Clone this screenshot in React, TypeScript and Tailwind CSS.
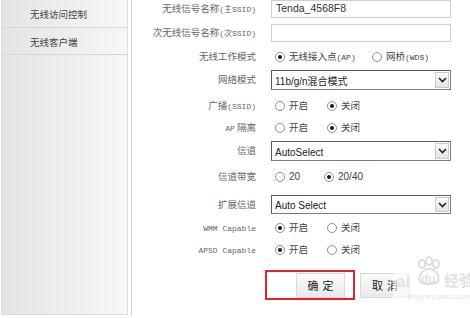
import React from "react";

const cjk = { fontFamily: '"Noto Sans CJK SC", "Noto Sans", sans-serif' };
const mono = { fontFamily: '"Liberation Mono", "Noto Sans CJK SC", monospace' };
const sans = { fontFamily: '"Liberation Sans", "Noto Sans CJK SC", sans-serif' };

function Radio({ checked }: { checked?: boolean }) {
  return (
    <span className="flex h-[10px] w-[10px] shrink-0 items-center justify-center rounded-full border border-[#8f8f8f] bg-white">
      {checked && <span className="h-[4px] w-[4px] rounded-full bg-[#1a1a1a]" />}
    </span>
  );
}

function Opt({ checked, label, w }: { checked?: boolean; label: React.ReactNode; w?: string }) {
  return (
    <div className={`flex items-center gap-[4px] ${w ?? ""}`}>
      <Radio checked={checked} />
      <span className="text-[9.5px] leading-none text-[#444]" style={cjk}>
        {label}
      </span>
    </div>
  );
}

function Select({ value }: { value: string }) {
  return (
    <div className="flex h-full w-[180px] items-stretch border border-[#7c7c7c] border-t-[#5e5e5e] border-l-[#5e5e5e] bg-white">
      <div className="flex flex-1 items-center pl-[3px] pt-[2px] text-[10px] text-[#222]" style={sans}>
        {value}
      </div>
      <div className="my-[1px] mr-[1px] flex w-[14px] items-center justify-center border border-[#c9c9c9] bg-gradient-to-b from-[#fbfbfb] to-[#e4e4e4]">
        <svg width="9" height="6" viewBox="0 0 9 6">
          <path d="M1 1 L4.5 4.5 L8 1" fill="none" stroke="#222" strokeWidth="1.6" />
        </svg>
      </div>
    </div>
  );
}

function Row({
  label,
  h,
  mt,
  children,
}: {
  label: React.ReactNode;
  h: string;
  mt: string;
  children: React.ReactNode;
}) {
  return (
    <div className={`flex items-center ${h} ${mt}`}>
      <div className="w-[125px] pr-[1px] text-right text-[9.5px] leading-none text-[#666]" style={cjk}>
        {label}
      </div>
      <div className="ml-[14px] flex h-full items-center">{children}</div>
    </div>
  );
}

export default function App() {
  return (
    <div className="relative flex h-[318px] w-[470px] overflow-hidden bg-white">
      {/* Sidebar */}
      <div className="flex h-[315px] shrink-0">
        <div className="ml-[1px] flex h-full w-[127px] flex-col border-b border-l border-r border-[#dcdcdc] bg-gradient-to-r from-[#e4e4e4] to-[#f7f7f7]">
          <div className="flex h-[28px] items-center border-b border-[#d6d6d6] pl-[28px] pt-[2px] text-[9.5px] text-[#444]" style={cjk}>
            无线访问控制
          </div>
          <div className="flex h-[27px] items-center border-b border-[#d6d6d6] pl-[28px] pt-[2px] text-[9.5px] text-[#444]" style={cjk}>
            无线客户端
          </div>
        </div>
        <div className="ml-[3px] h-full w-[1px] bg-[#cfcfcf]" />
      </div>

      {/* Form */}
      <div className="flex flex-col">
        <Row label={<>无线信号名称<span style={mono} className="text-[8px]">(主SSID)</span></>} h="h-[18px]" mt="mt-0">
          <div className="flex h-full w-[180px] items-center border border-[#cfcfcf] bg-white pl-[4px] text-[10.5px] text-[#333]" style={sans}>
            Tenda_4568F8
          </div>
        </Row>
        <Row label={<>次无线信号名称<span style={mono} className="text-[8px]">(次SSID)</span></>} h="h-[18px]" mt="mt-[6px]">
          <div className="h-full w-[180px] border border-[#cfcfcf] bg-white" />
        </Row>
        <Row label="无线工作模式" h="h-[18px]" mt="mt-[6px]">
          <div className="ml-[4px] flex items-center">
            <Opt checked w="w-[97px]" label={<>无线接入点<span style={mono} className="text-[8px]">(AP)</span></>} />
            <Opt label={<>网桥<span style={mono} className="text-[8px]">(WDS)</span></>} />
          </div>
        </Row>
        <Row label="网络模式" h="h-[20px]" mt="mt-[4px]">
          <Select value="11b/g/n混合模式" />
        </Row>
        <Row label={<>广播<span style={mono} className="text-[8px]">(SSID)</span></>} h="h-[18px]" mt="mt-[7px]">
          <div className="ml-[4px] flex items-center">
            <Opt w="w-[52px]" label="开启" />
            <Opt checked label="关闭" />
          </div>
        </Row>
        <Row label={<><span style={mono} className="text-[8px]">AP</span> 隔离</>} h="h-[18px]" mt="mt-[4px]">
          <div className="ml-[4px] flex items-center">
            <Opt w="w-[52px]" label="开启" />
            <Opt checked label="关闭" />
          </div>
        </Row>
        <Row label="信道" h="h-[20px]" mt="mt-[4px]">
          <Select value="AutoSelect" />
        </Row>
        <Row label="信道带宽" h="h-[18px]" mt="mt-[7px]">
          <div className="ml-[4px] flex items-center">
            <Opt w="w-[49px]" label={<span style={sans} className="text-[10px]">20</span>} />
            <Opt checked label={<span style={sans} className="text-[10px]">20/40</span>} />
          </div>
        </Row>
        <Row label="扩展信道" h="h-[19px]" mt="mt-[9px]">
          <Select value="Auto Select" />
        </Row>
        <Row label={<span style={mono} className="text-[8px]">WMM Capable</span>} h="h-[18px]" mt="mt-[5px]">
          <div className="ml-[4px] flex items-center">
            <Opt checked w="w-[52px]" label="开启" />
            <Opt label="关闭" />
          </div>
        </Row>
        <Row label={<span style={mono} className="text-[8px]">APSD Capable</span>} h="h-[18px]" mt="mt-[4px]">
          <div className="ml-[4px] flex items-center">
            <Opt checked w="w-[52px]" label="开启" />
            <Opt label="关闭" />
          </div>
        </Row>
        <div className="mt-[11px] flex items-center pl-[133px]">
          <div className="flex h-[30px] w-[90px] items-center justify-end border-2 border-[#e3222a] pr-[8px]">
            <div className="flex h-[25px] w-[49px] items-center justify-center border border-[#dadada] bg-gradient-to-b from-[#fafafa] to-[#e9e9e9] text-[11px] tracking-[4px] text-[#222]" style={cjk}>
              <span className="pl-[4px]">确定</span>
            </div>
          </div>
          <div className="ml-[5px] flex h-[25px] w-[50px] items-center justify-center border border-[#dadada] bg-gradient-to-b from-[#fafafa] to-[#e9e9e9] text-[11px] tracking-[4px] text-[#222]" style={cjk}>
            <span className="pl-[4px]">取消</span>
          </div>
        </div>
      </div>

      {/* Watermark overlay */}
      <div className="pointer-events-none absolute left-[393px] top-[273px] h-[27px] w-[77px] bg-white/60" />
      <svg className="pointer-events-none absolute left-[415px] top-[256px]" width="28" height="30" viewBox="0 0 28 30">
        <g fill="none" stroke="#dedede" strokeWidth="2">
          <ellipse cx="7" cy="8" rx="3" ry="4" />
          <ellipse cx="14" cy="5" rx="3" ry="4" />
          <ellipse cx="21" cy="8" rx="3" ry="4" />
          <path d="M14 13 C7 13 3 21 5 25 C7 29 21 29 23 25 C25 21 21 13 14 13 Z" />
        </g>
      </svg>
      <div className="pointer-events-none absolute left-[396px] top-[273px] text-[17px] font-bold leading-none text-[#e2e2e2]" style={sans}>
        ai
      </div>
      <div className="pointer-events-none absolute left-[421px] top-[273px] text-[12px] font-bold leading-none text-[#e2e2e2]" style={sans}>
        du
      </div>
      <div className="pointer-events-none absolute left-[444px] top-[272px] whitespace-nowrap text-[15px] font-bold leading-none text-[#e2e2e2]" style={cjk}>
        经验
      </div>
      <div className="pointer-events-none absolute left-[408px] top-[293px] whitespace-nowrap text-[8px] leading-none text-[#e4e4e4]" style={sans}>
        jingyan.baidu.com
      </div>
    </div>
  );
}
